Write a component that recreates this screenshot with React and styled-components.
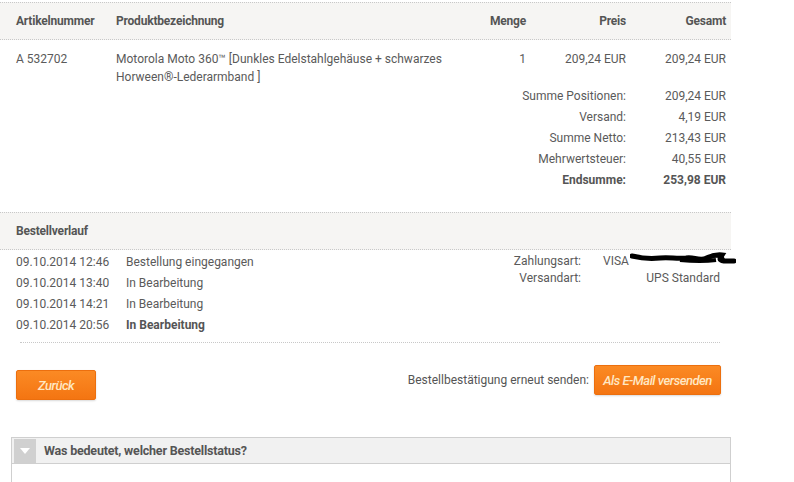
import React from "react";
import styled, { createGlobalStyle } from "styled-components";

const items = [
  {
    nr: "A 532702",
    name: "Motorola Moto 360™ [Dunkles Edelstahlgehäuse + schwarzes Horween®-Lederarmband ]",
    qty: "1",
    price: "209,24 EUR",
    total: "209,24 EUR",
  },
];

const sums = [
  { label: "Summe Positionen:", value: "209,24 EUR" },
  { label: "Versand:", value: "4,19 EUR" },
  { label: "Summe Netto:", value: "213,43 EUR" },
  { label: "Mehrwertsteuer:", value: "40,55 EUR" },
  { label: "Endsumme:", value: "253,98 EUR", strong: true },
];

const history = [
  { date: "09.10.2014 12:46", status: "Bestellung eingegangen" },
  { date: "09.10.2014 13:40", status: "In Bearbeitung" },
  { date: "09.10.2014 14:21", status: "In Bearbeitung" },
  { date: "09.10.2014 20:56", status: "In Bearbeitung", strong: true },
];

function App() {
  return (
    <>
      <GlobalStyle />
      <Page>
        <TableHeader>
          <HeadCell>Artikelnummer</HeadCell>
          <HeadCell>Produktbezeichnung</HeadCell>
          <HeadCell $right>Menge</HeadCell>
          <HeadCell $right>Preis</HeadCell>
          <HeadCell $right>Gesamt</HeadCell>
        </TableHeader>

        {items.map((it) => (
          <ItemRow key={it.nr}>
            <Cell>{it.nr}</Cell>
            <Cell>{it.name}</Cell>
            <Cell $right>{it.qty}</Cell>
            <Cell $right>{it.price}</Cell>
            <Cell $right>{it.total}</Cell>
          </ItemRow>
        ))}

        {sums.map((s) => (
          <SumRow key={s.label} $strong={s.strong}>
            <SumLabel>{s.label}</SumLabel>
            <SumValue>{s.value}</SumValue>
          </SumRow>
        ))}

        <SectionHeader>Bestellverlauf</SectionHeader>

        <HistoryWrap>
          <HistoryList>
            {history.map((h) => (
              <HistoryRow key={h.date}>
                <HistoryDate>{h.date}</HistoryDate>
                <HistoryStatus $strong={h.strong}>{h.status}</HistoryStatus>
              </HistoryRow>
            ))}
          </HistoryList>

          <InfoGrid>
            <InfoLabel>Zahlungsart:</InfoLabel>
            <InfoValue>
              VISA
              {/* blacked-out card number */}
              <Scribble viewBox="0 0 106 14" width="106" height="14">
                <path
                  d="M2 4 C10 6 20 7 30 6 C40 5 46 7 56 6 C64 5 66 8 74 7 C80 5 84 2 92 3 C90 6 88 8 94 9 L104 9"
                  fill="none"
                  stroke="#000"
                  strokeWidth="5"
                  strokeLinecap="round"
                />
                <path d="M50 8 C60 9 72 10 86 8" fill="none" stroke="#000" strokeWidth="4" />
                <path d="M82 4 C88 2 92 4 93 8" fill="none" stroke="#000" strokeWidth="4.5" />
              </Scribble>
            </InfoValue>
            <InfoLabel>Versandart:</InfoLabel>
            <InfoValue $right>UPS Standard</InfoValue>
          </InfoGrid>
        </HistoryWrap>

        <Divider />

        <Actions>
          <BackButton>Zurück</BackButton>
          <ResendGroup>
            <ResendText>Bestellbestätigung erneut senden:</ResendText>
            <OrangeButton>Als E-Mail versenden</OrangeButton>
          </ResendGroup>
        </Actions>

        <Accordion>
          <AccordionHead>
            <AccordionIcon>
              <svg width="10" height="6" viewBox="0 0 10 6">
                <path d="M0 0 L10 0 L5 6 Z" fill="#fff" />
              </svg>
            </AccordionIcon>
            <AccordionTitle>Was bedeutet, welcher Bestellstatus?</AccordionTitle>
          </AccordionHead>
          <AccordionBody />
        </Accordion>
      </Page>
    </>
  );
}

export default App;

const GlobalStyle = createGlobalStyle`
  body {
    margin: 0;
    background: #fff;
    font-family: Roboto, "Liberation Sans", sans-serif;
    font-size: 12px;
    color: #5a5a5a;
    overflow: hidden;
  }
`;

const Page = styled.div`
  width: 731px;
  padding-top: 2px;
`;

const tableColumns = `100px 350px 60px 100px 100px`;

const TableHeader = styled.div`
  display: grid;
  grid-template-columns: ${tableColumns};
  align-items: center;
  height: 36px;
  padding: 0 5px 0 16px;
  background: #f6f5f3;
  border-top: 1px dotted #c8c8c8;
  border-bottom: 1px dotted #c8c8c8;
`;

const HeadCell = styled.div`
  font-weight: 700;
  color: #555;
  letter-spacing: -0.2px;
  text-align: ${(p) => (p.$right ? "right" : "left")};
`;

const ItemRow = styled.div`
  display: grid;
  grid-template-columns: ${tableColumns};
  padding: 10px 5px 0 16px;
  line-height: 18px;
`;

const Cell = styled.div`
  text-align: ${(p) => (p.$right ? "right" : "left")};
  padding-right: ${(p) => (p.$right ? "0" : "10px")};
`;

const SumRow = styled.div`
  display: grid;
  grid-template-columns: 1fr 100px;
  padding: 0 5px 0 16px;
  line-height: 21px;
  font-weight: ${(p) => (p.$strong ? 700 : 400)};
  color: ${(p) => (p.$strong ? "#555" : "#5a5a5a")};
`;

const SumLabel = styled.div`
  text-align: right;
`;

const SumValue = styled.div`
  text-align: right;
`;

const SectionHeader = styled.div`
  margin-top: 21px;
  height: 36px;
  display: flex;
  align-items: center;
  padding-left: 16px;
  background: #f6f5f3;
  border-top: 1px dotted #c8c8c8;
  border-bottom: 1px dotted #c8c8c8;
  font-weight: 700;
  color: #555;
  letter-spacing: -0.2px;
`;

const HistoryWrap = styled.div`
  display: flex;
  justify-content: space-between;
  padding: 2px 11px 0 16px;
`;

const HistoryList = styled.div`
  display: flex;
  flex-direction: column;
`;

const HistoryRow = styled.div`
  display: flex;
  line-height: 21px;
`;

const HistoryDate = styled.div`
  width: 110px;
`;

const HistoryStatus = styled.div`
  font-weight: ${(p) => (p.$strong ? 700 : 400)};
  color: ${(p) => (p.$strong ? "#555" : "#5a5a5a")};
`;

const InfoGrid = styled.div`
  display: grid;
  grid-template-columns: auto 117px;
  column-gap: 22px;
  line-height: 17px;
  align-content: start;
  padding-top: 1px;
`;

const InfoLabel = styled.div`
  text-align: right;
`;

const InfoValue = styled.div`
  position: relative;
  text-align: ${(p) => (p.$right ? "right" : "left")};
`;

const Scribble = styled.svg`
  position: absolute;
  left: 27px;
  top: -1px;
`;

const Divider = styled.div`
  margin: 6px 11px 0 20px;
  border-top: 1px dotted #c8c8c8;
`;

const Actions = styled.div`
  display: flex;
  justify-content: space-between;
  align-items: flex-start;
  padding: 22px 10px 0 16px;
`;

const orangeBase = `
  background: linear-gradient(#fb8a24, #f47512);
  border: 1px solid #ec6f0e;
  border-radius: 2px;
  color: #ffe8c4;
  font-family: Roboto, "Liberation Sans", sans-serif;
  font-style: italic;
  font-weight: 500;
  font-size: 13px;
  letter-spacing: -0.5px;
  box-shadow: 0 1px 2px rgba(0, 0, 0, 0.15);
  cursor: pointer;
`;

const BackButton = styled.button`
  ${orangeBase}
  margin-top: 5px;
  width: 80px;
  height: 30px;
`;

const ResendGroup = styled.div`
  display: flex;
  align-items: center;
  gap: 5px;
`;

const ResendText = styled.span`
  color: #555;
`;

const OrangeButton = styled.button`
  ${orangeBase}
  height: 30px;
  padding: 0 5px;
  width: 127px;
`;

const Accordion = styled.div`
  margin: 37px 0 0 11px;
  width: 718px;
  border: 1px solid #cfcfcf;
`;

const AccordionHead = styled.div`
  display: flex;
  align-items: center;
  gap: 8px;
  height: 25px;
  padding-left: 2px;
  background: #f1f1f1;
  border-bottom: 1px solid #cfcfcf;
`;

const AccordionIcon = styled.div`
  width: 22px;
  height: 24px;
  background: #d0d0d0;
  display: flex;
  align-items: center;
  justify-content: center;
`;

const AccordionTitle = styled.div`
  font-weight: 700;
  font-size: 12.5px;
  color: #555;
  letter-spacing: -0.2px;
`;

const AccordionBody = styled.div`
  height: 60px;
`;
